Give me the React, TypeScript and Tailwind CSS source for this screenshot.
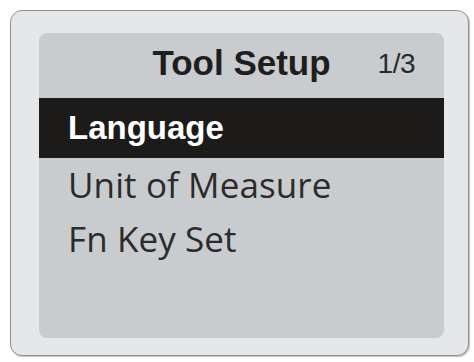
const ITEMS = ["Language", "Unit of Measure", "Fn Key Set"];

export default function App() {
  return (
    <div className="h-[362px] w-[474px] bg-white pl-[10px] pt-[10px]">
      <div className="h-[346px] w-[459px] rounded-[12px] border-[1.5px] border-[#8e9092] bg-[#e5e7e9] pl-[28px] pt-[22px] shadow-[1px_1px_1px_rgba(0,0,0,0.25)]">
        <div className="flex h-[305px] w-[405px] flex-col overflow-hidden rounded-[8px] bg-[#c9cccf]">
          <div className="grid h-[65px] grid-cols-[1fr_auto_1fr] items-center pb-[4px]">
            <span />
            <span className="font-['Liberation_Sans',Arial,sans-serif] text-[35px] font-bold text-[#1e1e1e]">
              Tool Setup
            </span>
            <span className="justify-self-end pr-[29px] font-['Liberation_Sans',Arial,sans-serif] text-[28px] tracking-[-0.5px] text-[#2a2a2a]">
              1/3
            </span>
          </div>
          {ITEMS.map((item, i) =>
            i === 0 ? (
              <div
                key={item}
                className="flex h-[60px] items-center bg-[#1d1a1a] pl-[29px] font-['Liberation_Sans',Arial,sans-serif] text-[33px] font-bold text-white"
              >
                {item}
              </div>
            ) : (
              <div
                key={item}
                className="flex h-[54px] items-center pl-[29px] font-['Open_Sans',sans-serif] text-[35px] font-medium tracking-[0.1px] text-[#2b2b2b]"
              >
                {item}
              </div>
            )
          )}
        </div>
      </div>
    </div>
  );
}
